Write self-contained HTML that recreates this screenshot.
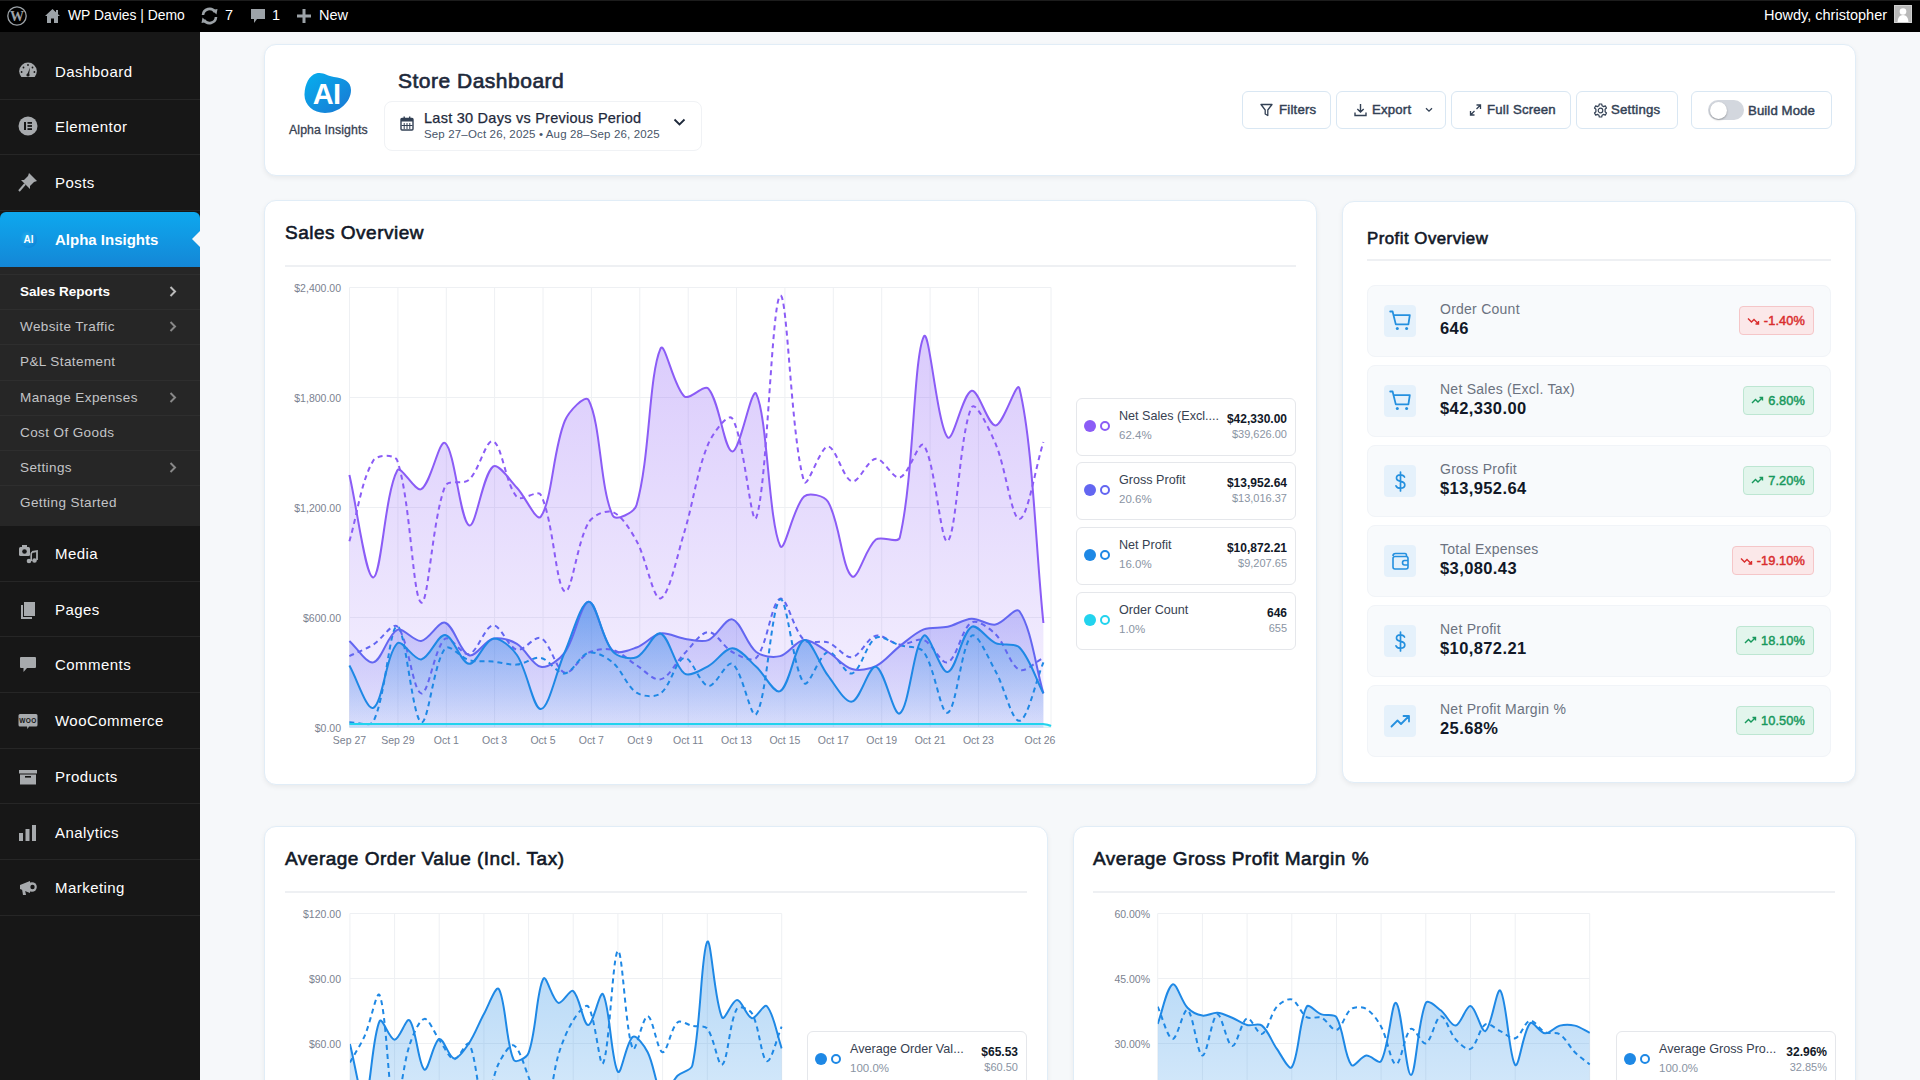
<!DOCTYPE html>
<html><head><meta charset="utf-8">
<style>
*{box-sizing:border-box;margin:0;padding:0}
html,body{width:1920px;height:1080px;overflow:hidden}
body{font-family:"Liberation Sans",sans-serif;background:#f6f8fa;position:relative;color:#1e293b}
.abs{position:absolute}
#adminbar{position:absolute;left:0;top:0;width:1920px;height:32px;background:#000;color:#fff;font-size:14px}
#adminbar .t{position:absolute;top:-1px;line-height:32px;white-space:nowrap}
#side{position:absolute;left:0;top:32px;width:200px;height:1048px;background:#171717}
.mi{position:absolute;left:0;width:200px;height:56px;border-bottom:1px solid #262626;color:#fff;font-size:15px;letter-spacing:0.45px}
.mi .lb{position:absolute;left:55px;top:0;line-height:55px;white-space:nowrap}

.sub{position:absolute;left:0;width:200px;background:#262626}
.si{position:absolute;left:0;width:200px;height:35px;border-top:1px solid #2e2e2e;color:#c8c8c8;font-size:13.5px;letter-spacing:0.4px}
.si .lb{position:absolute;left:20px;top:-1px;line-height:35px;white-space:nowrap}
.si .chev{position:absolute;left:169px;top:11px}
.card{position:absolute;background:#fff;border:1px solid #e1edf7;border-radius:12px;box-shadow:0 2px 5px rgba(0,0,0,0.06)}
.btn{position:absolute;top:91px;height:38px;border:1px solid #d9e7f3;border-radius:6px;background:#fff;font-size:13.2px;font-weight:normal;-webkit-text-stroke:0.45px #334155;letter-spacing:0.2px;color:#334155;line-height:36px;white-space:nowrap}
.ttl{position:absolute;font-size:19px;font-weight:normal;-webkit-text-stroke:0.6px #111827;color:#111827;white-space:nowrap;letter-spacing:0.5px}
.sep{position:absolute;height:2px;background:#eef0f3}
.lg{position:absolute;left:1076px;width:220px;height:58px;border:1px solid #e5e7eb;border-radius:6px;background:#fff}
.lg .d1{position:absolute;left:7px;top:21px;width:12px;height:12px;border-radius:50%}
.lg .d2{position:absolute;left:23px;top:22px;width:10px;height:10px;border-radius:50%;border:2px solid}
.lg .n{position:absolute;left:42px;top:10px;font-size:12.6px;color:#374151;white-space:nowrap}
.lg .p{position:absolute;left:42px;top:30px;font-size:11.5px;color:#8a94a3;white-space:nowrap}
.lg .v{position:absolute;right:8px;top:13px;font-size:12px;font-weight:bold;color:#111827;white-space:nowrap}
.lg .pv{position:absolute;right:8px;top:29px;font-size:11px;color:#8a94a3;white-space:nowrap}
.po{position:absolute;left:1367px;width:464px;height:72px;background:#f8fafc;border:1px solid #f1f4f8;border-radius:8px}
.po .ic{position:absolute;left:16px;top:19px;width:32px;height:32px;border-radius:4px;background:#e5f1fb}
.po .ic svg{position:absolute;left:5px;top:5px}
.po .l{position:absolute;left:72px;top:14.5px;font-size:14px;color:#6b7280;letter-spacing:0.25px;white-space:nowrap}
.po .v{position:absolute;left:72px;top:33px;font-size:16.5px;letter-spacing:0.4px;font-weight:bold;color:#111827;white-space:nowrap}
.bd{position:absolute;top:20px;right:16px;height:29px;border-radius:4px;font-size:12.8px;font-weight:normal;line-height:27px;padding:0 8px 0 7px;white-space:nowrap;letter-spacing:0.1px}
.bd.r{background:#fbe8e9;border:1px solid #f5c6c8;color:#d92d2d;-webkit-text-stroke:0.45px #d92d2d}
.bd.g{background:#e2f5ec;border:1px solid #bde6d2;color:#17985c;-webkit-text-stroke:0.45px #17985c}
.yl{position:absolute;font-size:10.5px;color:#7b8290;text-align:right;white-space:nowrap}
.xl{position:absolute;font-size:10.5px;color:#7b8290;white-space:nowrap;transform:translateX(-50%)}
</style></head><body>
<div id="adminbar"><div class="abs" style="left:0;top:0;width:1920px;height:1px;background:#1c1c1c"></div>
<svg class="abs" style="left:7px;top:6px" width="20" height="20" viewBox="0 0 20 20"><circle cx="10" cy="10" r="9.2" fill="none" stroke="#9ca2a7" stroke-width="1.3"/><text x="10" y="15" font-family="Liberation Serif" font-size="14" font-weight="bold" fill="#9ca2a7" text-anchor="middle">W</text></svg>
<svg class="abs" style="left:44px;top:8px" width="17" height="16" viewBox="0 0 17 16"><path d="M8.5 1 L1 8 L3 8 L3 15 L7 15 L7 10.5 L10 10.5 L10 15 L14 15 L14 8 L16 8 Z" fill="#9ca2a7"/><rect x="12" y="2" width="2" height="4" fill="#9ca2a7"/></svg>
<div class="t" style="left:68px;font-size:13.9px">WP Davies | Demo</div>
<svg class="abs" style="left:200px;top:7px" width="19" height="18" viewBox="0 0 19 18"><path d="M3 8 A6.5 6.5 0 0 1 15 5" fill="none" stroke="#9ca2a7" stroke-width="2.6"/><path d="M16 10 A6.5 6.5 0 0 1 4 13" fill="none" stroke="#9ca2a7" stroke-width="2.6"/><path d="M12 3 L17.5 2 L16.5 7.5 Z" fill="#9ca2a7"/><path d="M7 15 L1.5 16 L2.5 10.5 Z" fill="#9ca2a7"/></svg>
<div class="t" style="left:225px;font-size:14.5px">7</div>
<svg class="abs" style="left:250px;top:8px" width="16" height="18" viewBox="0 0 16 18"><path d="M1 1 H15 V11 H7 L4 15 V11 H1 Z" fill="#9ca2a7"/></svg>
<div class="t" style="left:272px;font-size:14.5px">1</div>
<svg class="abs" style="left:297px;top:9px" width="14" height="14" viewBox="0 0 14 14"><rect x="5.5" y="0" width="3" height="14" fill="#9ca2a7"/><rect x="0" y="5.5" width="14" height="3" fill="#9ca2a7"/></svg>
<div class="t" style="left:319px;font-size:14.5px">New</div>
<div class="t" style="left:1764px;font-size:14.5px">Howdy, christopher</div>
<div class="abs" style="left:1894px;top:5px;width:18px;height:18px;background:#b9b9b9;border:1px solid #cfcfcf;overflow:hidden"><svg width="16" height="16" viewBox="0 0 16 16"><circle cx="8" cy="5.5" r="3.3" fill="#fff"/><path d="M2.5 16 Q3 9 8 9 Q13 9 13.5 16 Z" fill="#fff"/></svg></div>
</div>
<div id="side">
<div class="mi" style="top:11.5px;height:56px"><div class="abs" style="left:18px;top:17px"><svg width="20" height="20" viewBox="0 0 20 20"><path d="M3.3 16 A8.8 8.8 0 1 1 16.7 16 Z" fill="#a7aaad"/><circle cx="10" cy="4" r="0.9" fill="#171717"/><circle cx="5.5" cy="6.5" r="0.9" fill="#171717"/><circle cx="14.5" cy="6.5" r="0.9" fill="#171717"/><circle cx="3.6" cy="11" r="0.9" fill="#171717"/><circle cx="16.4" cy="11" r="0.9" fill="#171717"/><path d="M9 14 L12 6.5 L11 14.5 Z" fill="#171717"/><circle cx="10" cy="14" r="1.6" fill="#171717"/></svg></div><div class="lb">Dashboard</div></div>
<div class="mi" style="top:67px;height:56px"><div class="abs" style="left:18px;top:17px"><svg width="20" height="20" viewBox="0 0 20 20"><circle cx="10" cy="10" r="9.5" fill="#a7aaad"/><rect x="6" y="6" width="2" height="8" fill="#151515"/><rect x="9.5" y="6" width="4.5" height="1.8" fill="#151515"/><rect x="9.5" y="9.1" width="4.5" height="1.8" fill="#151515"/><rect x="9.5" y="12.2" width="4.5" height="1.8" fill="#151515"/></svg></div><div class="lb">Elementor</div></div>
<div class="mi" style="top:123px;height:56px"><div class="abs" style="left:18px;top:17px"><svg width="20" height="20" viewBox="0 0 20 20"><path d="M11 1 L19 9 L16 10 L12 14 L12 17 L3 8 L6 8 L10 4 Z" fill="#a7aaad"/><path d="M7 12 L1 19" stroke="#a7aaad" stroke-width="2"/></svg></div><div class="lb">Posts</div></div>
<div class="abs" style="left:0;top:180px;width:200px;height:56px;background:linear-gradient(180deg,#0ea8ee,#1486d6);border-radius:6px 6px 0 0"></div>
<div class="abs" style="left:20px;top:199px;width:17px;height:17px;border-radius:50%;background:radial-gradient(circle at 40% 35%,#1fb0f0,#0a78d0);color:#fff;font-size:10px;font-weight:bold;line-height:17px;text-align:center">AI</div>
<div class="abs" style="left:55px;top:180px;line-height:55px;color:#fff;font-size:15px;font-weight:bold;white-space:nowrap">Alpha Insights</div>
<div class="abs" style="left:192px;top:199px;width:0;height:0;border-top:8px solid transparent;border-bottom:8px solid transparent;border-right:8px solid #f6f8fa"></div>
<div class="sub" style="top:235px;height:259px">
<div class="si" style="top:7px"><div class="lb" style="color:#fff;font-weight:bold;letter-spacing:0">Sales Reports</div><svg class="chev" width="8" height="11" viewBox="0 0 8 11"><path d="M1.5 1 L6 5.5 L1.5 10" fill="none" stroke="#bbb" stroke-width="2"/></svg></div>
<div class="si" style="top:42.2px"><div class="lb" style="color:#c3c4c7;font-weight:normal;letter-spacing:0.4px">Website Traffic</div><svg class="chev" width="8" height="11" viewBox="0 0 8 11"><path d="M1.5 1 L6 5.5 L1.5 10" fill="none" stroke="#888" stroke-width="2"/></svg></div>
<div class="si" style="top:77.4px"><div class="lb" style="color:#c3c4c7;font-weight:normal;letter-spacing:0.4px">P&amp;L Statement</div></div>
<div class="si" style="top:112.60000000000001px"><div class="lb" style="color:#c3c4c7;font-weight:normal;letter-spacing:0.4px">Manage Expenses</div><svg class="chev" width="8" height="11" viewBox="0 0 8 11"><path d="M1.5 1 L6 5.5 L1.5 10" fill="none" stroke="#888" stroke-width="2"/></svg></div>
<div class="si" style="top:147.8px"><div class="lb" style="color:#c3c4c7;font-weight:normal;letter-spacing:0.4px">Cost Of Goods</div></div>
<div class="si" style="top:183.0px"><div class="lb" style="color:#c3c4c7;font-weight:normal;letter-spacing:0.4px">Settings</div><svg class="chev" width="8" height="11" viewBox="0 0 8 11"><path d="M1.5 1 L6 5.5 L1.5 10" fill="none" stroke="#888" stroke-width="2"/></svg></div>
<div class="si" style="top:218.2px"><div class="lb" style="color:#c3c4c7;font-weight:normal;letter-spacing:0.4px">Getting Started</div></div>
</div>
<div class="mi" style="top:494px;height:55.7px"><div class="abs" style="left:18px;top:18px"><svg width="20" height="20" viewBox="0 0 20 20"><rect x="1" y="3" width="11" height="9" rx="1.5" fill="#a7aaad"/><rect x="4" y="1" width="5" height="3" fill="#a7aaad"/><circle cx="6.5" cy="7.5" r="2.3" fill="#151515"/><path d="M14 8 L19 7 L19 16" stroke="#a7aaad" stroke-width="1.8" fill="none"/><circle cx="16.5" cy="16.5" r="2.3" fill="#a7aaad"/><circle cx="11" cy="17" r="2.3" fill="#a7aaad"/><path d="M13.2 17 L13.2 10 L14 8" stroke="#a7aaad" stroke-width="1.6" fill="none"/></svg></div><div class="lb">Media</div></div>
<div class="mi" style="top:549.7px;height:55.7px"><div class="abs" style="left:18px;top:18px"><svg width="20" height="20" viewBox="0 0 20 20"><rect x="6" y="2" width="11" height="14" fill="#a7aaad"/><path d="M4 5 V18 H14" stroke="#a7aaad" stroke-width="2" fill="none"/></svg></div><div class="lb">Pages</div></div>
<div class="mi" style="top:605.4000000000001px;height:55.7px"><div class="abs" style="left:18px;top:18px"><svg width="20" height="20" viewBox="0 0 20 20"><path d="M3 2 H17 Q18 2 18 3 V12 Q18 13 17 13 H9 L5.5 17 V13 H3 Q2 13 2 12 V3 Q2 2 3 2 Z" fill="#a7aaad"/></svg></div><div class="lb">Comments</div></div>
<div class="mi" style="top:661.1000000000001px;height:55.7px"><div class="abs" style="left:18px;top:18px"><svg width="20" height="20" viewBox="0 0 20 20"><path d="M2 3 H18 Q19.5 3 19.5 4.5 V14 Q19.5 15.5 18 15.5 H11 L9.5 18 L9 15.5 H2 Q0.5 15.5 0.5 14 V4.5 Q0.5 3 2 3 Z" fill="#a7aaad"/><text x="10" y="11.8" font-family="Liberation Sans" font-size="6.5" font-weight="bold" fill="#151515" text-anchor="middle">WOO</text></svg></div><div class="lb">WooCommerce</div></div>
<div class="mi" style="top:716.8000000000002px;height:55.7px"><div class="abs" style="left:18px;top:18px"><svg width="20" height="20" viewBox="0 0 20 20"><rect x="1" y="3" width="18" height="3.5" fill="#a7aaad"/><rect x="2" y="7.5" width="16" height="10" fill="#a7aaad"/><rect x="7" y="9" width="6" height="1.6" fill="#151515"/></svg></div><div class="lb">Products</div></div>
<div class="mi" style="top:772.5000000000002px;height:55.7px"><div class="abs" style="left:18px;top:18px"><svg width="20" height="20" viewBox="0 0 20 20"><rect x="1" y="10" width="4" height="8" fill="#a7aaad"/><rect x="7.5" y="6" width="4" height="12" fill="#a7aaad"/><rect x="14" y="2" width="4" height="16" fill="#a7aaad"/></svg></div><div class="lb">Analytics</div></div>
<div class="mi" style="top:828.2000000000003px;height:55.7px"><div class="abs" style="left:18px;top:18px"><svg width="20" height="20" viewBox="0 0 20 20"><path d="M2 7 L12 3 V15 L2 11 Z" fill="#a7aaad"/><circle cx="14" cy="9" r="4.8" fill="#a7aaad"/><circle cx="14.5" cy="9" r="2.2" fill="#151515"/><path d="M4 11 L5 17 H8 L7 12" fill="#a7aaad"/></svg></div><div class="lb">Marketing</div></div>
</div>
<div class="card" style="left:264px;top:44px;width:1592px;height:132px"></div>
<svg class="abs" style="left:303px;top:72px" width="50" height="43" viewBox="0 0 50 43"><defs><linearGradient id="lgb" x1="0" y1="0" x2="1" y2="1"><stop offset="0" stop-color="#06b0ef"/><stop offset="1" stop-color="#1a76d2"/></linearGradient></defs><path d="M13 1.5 C20 -0.5 24 4 31 5 C40 6 48 9 48 18 C48 30 36 41 22 41 C10 41 1 33 1.5 22 C2 12 6 3.5 13 1.5 Z" fill="url(#lgb)"/><text x="23.5" y="31.5" font-family="Liberation Sans" font-size="29" font-weight="bold" fill="#fff" text-anchor="middle" letter-spacing="-0.8">AI</text></svg>
<div class="abs" style="left:289px;top:123px;font-size:12.3px;color:#374151;letter-spacing:0.1px;-webkit-text-stroke:0.3px #374151;white-space:nowrap">Alpha Insights</div>
<div class="abs" style="left:398px;top:69px;font-size:21px;font-weight:normal;-webkit-text-stroke:0.65px #1e293b;letter-spacing:0.5px;color:#1e293b;white-space:nowrap">Store Dashboard</div>
<div class="abs" style="left:384px;top:101px;width:318px;height:50px;border:1px solid #f0f2f5;border-radius:8px;background:#fff"></div>
<svg class="abs" style="left:400px;top:116px" width="14" height="15" viewBox="0 0 14 15"><rect x="1" y="2.5" width="12" height="11.5" rx="1" fill="none" stroke="#334155" stroke-width="1.4"/><rect x="1" y="2.5" width="12" height="3" fill="#334155"/><rect x="3.5" y="0.5" width="1.4" height="3" fill="#334155"/><rect x="9" y="0.5" width="1.4" height="3" fill="#334155"/><path d="M4.2 7 V13 M7 7 V13 M9.8 7 V13 M1.5 9.5 H12.5" stroke="#334155" stroke-width="1"/></svg>
<div class="abs" style="left:424px;top:110px;font-size:14.5px;color:#1e293b;letter-spacing:0.25px;-webkit-text-stroke:0.25px #1e293b;white-space:nowrap">Last 30 Days vs Previous Period</div>
<div class="abs" style="left:424px;top:128px;font-size:11.5px;color:#475569;letter-spacing:0.15px;white-space:nowrap">Sep 27&#8211;Oct 26, 2025 &#8226; Aug 28&#8211;Sep 26, 2025</div>
<svg class="abs" style="left:673px;top:118px" width="13" height="9" viewBox="0 0 13 9"><path d="M1.5 1.5 L6.5 6.5 L11.5 1.5" fill="none" stroke="#1e293b" stroke-width="1.8"/></svg>
<div class="btn" style="left:1242px;width:89px"><svg class="abs" style="left:17px;top:11px" width="13" height="14" viewBox="0 0 13 14"><path d="M1 1.5 H12 L7.8 7 V12.5 L5.2 11 V7 Z" fill="none" stroke="#334155" stroke-width="1.3" stroke-linejoin="round"/></svg><span class="abs" style="left:36px;top:0">Filters</span></div>
<div class="btn" style="left:1336px;width:110px"><svg class="abs" style="left:17px;top:11px" width="13" height="14" viewBox="0 0 13 14"><path d="M6.5 1 V9 M3.3 6 L6.5 9 L9.7 6 M1 9.5 V12.5 H12 V9.5" fill="none" stroke="#334155" stroke-width="1.4"/></svg><svg class="abs" style="left:88px;top:15px" width="8" height="6" viewBox="0 0 8 6"><path d="M1 1.2 L4 4.2 L7 1.2" fill="none" stroke="#334155" stroke-width="1.3"/></svg><span class="abs" style="left:35px;top:0">Export</span></div>
<div class="btn" style="left:1451px;width:120px"><svg class="abs" style="left:17px;top:11px" width="13" height="14" viewBox="0 0 13 14"><path d="M7.5 2 H11.5 V6 M11.5 2 L7.5 6 M5.5 12 H1.5 V8 M1.5 12 L5.5 8" fill="none" stroke="#334155" stroke-width="1.3"/></svg><span class="abs" style="left:35px;top:0">Full Screen</span></div>
<div class="btn" style="left:1576px;width:102px"><svg class="abs" style="left:16px;top:11px" width="15" height="15" viewBox="0 0 15 15"><circle cx="7.5" cy="7.5" r="2.3" fill="none" stroke="#334155" stroke-width="1.2"/><path d="M6.3 1 H8.7 L9.1 2.8 L10.6 3.6 L12.3 2.9 L13.5 5 L12.1 6.2 V8.8 L13.5 10 L12.3 12.1 L10.6 11.4 L9.1 12.2 L8.7 14 H6.3 L5.9 12.2 L4.4 11.4 L2.7 12.1 L1.5 10 L2.9 8.8 V6.2 L1.5 5 L2.7 2.9 L4.4 3.6 L5.9 2.8 Z" fill="none" stroke="#334155" stroke-width="1.2" stroke-linejoin="round"/></svg><span class="abs" style="left:34px;top:0">Settings</span></div>
<div class="btn" style="left:1691px;width:141px"><div class="abs" style="left:16px;top:8px;width:36px;height:20px;border-radius:10px;background:#d3d7de"></div><div class="abs" style="left:17.5px;top:9.5px;width:17px;height:17px;border-radius:50%;background:#fff;box-shadow:0 1px 2px rgba(0,0,0,0.3)"></div><span class="abs" style="left:56px;top:1px;letter-spacing:0.1px">Build Mode</span></div>
<div class="card" style="left:264px;top:200px;width:1053px;height:585px"></div>
<div class="ttl" style="left:285px;top:222px">Sales Overview</div>
<div class="sep" style="left:285px;top:265px;width:1011px"></div>
<svg class="abs" style="left:0;top:0" width="1920" height="1080" viewBox="0 0 1920 1080">
<defs>
<linearGradient id="gNS" x1="0" y1="0" x2="0" y2="1"><stop offset="0" stop-color="#8b5cf6" stop-opacity="0.32"/><stop offset="1" stop-color="#8b5cf6" stop-opacity="0.08"/></linearGradient>
<linearGradient id="gGP" x1="0" y1="0" x2="0" y2="1"><stop offset="0" stop-color="#6366f1" stop-opacity="0.35"/><stop offset="1" stop-color="#6366f1" stop-opacity="0.1"/></linearGradient>
<linearGradient id="gNP" x1="0" y1="0" x2="0" y2="1"><stop offset="0" stop-color="#1e88e5" stop-opacity="0.45"/><stop offset="1" stop-color="#1e88e5" stop-opacity="0.06"/></linearGradient>
<clipPath id="cp1"><rect x="340" y="280" width="712" height="450"/></clipPath>
</defs>
<line x1="349.5" y1="287.5" x2="1051.0" y2="287.5" stroke="#eef0f3" stroke-width="1"/>
<line x1="349.5" y1="397.5" x2="1051.0" y2="397.5" stroke="#eef0f3" stroke-width="1"/>
<line x1="349.5" y1="507.5" x2="1051.0" y2="507.5" stroke="#eef0f3" stroke-width="1"/>
<line x1="349.5" y1="617.5" x2="1051.0" y2="617.5" stroke="#eef0f3" stroke-width="1"/>
<line x1="349.5" y1="727.5" x2="1051.0" y2="727.5" stroke="#eef0f3" stroke-width="1"/>
<line x1="349.5" y1="287.5" x2="349.5" y2="727.5" stroke="#eef0f3" stroke-width="1"/>
<line x1="397.9" y1="287.5" x2="397.9" y2="727.5" stroke="#eef0f3" stroke-width="1"/>
<line x1="446.3" y1="287.5" x2="446.3" y2="727.5" stroke="#eef0f3" stroke-width="1"/>
<line x1="494.6" y1="287.5" x2="494.6" y2="727.5" stroke="#eef0f3" stroke-width="1"/>
<line x1="543.0" y1="287.5" x2="543.0" y2="727.5" stroke="#eef0f3" stroke-width="1"/>
<line x1="591.4" y1="287.5" x2="591.4" y2="727.5" stroke="#eef0f3" stroke-width="1"/>
<line x1="639.8" y1="287.5" x2="639.8" y2="727.5" stroke="#eef0f3" stroke-width="1"/>
<line x1="688.2" y1="287.5" x2="688.2" y2="727.5" stroke="#eef0f3" stroke-width="1"/>
<line x1="736.5" y1="287.5" x2="736.5" y2="727.5" stroke="#eef0f3" stroke-width="1"/>
<line x1="784.9" y1="287.5" x2="784.9" y2="727.5" stroke="#eef0f3" stroke-width="1"/>
<line x1="833.3" y1="287.5" x2="833.3" y2="727.5" stroke="#eef0f3" stroke-width="1"/>
<line x1="881.7" y1="287.5" x2="881.7" y2="727.5" stroke="#eef0f3" stroke-width="1"/>
<line x1="930.1" y1="287.5" x2="930.1" y2="727.5" stroke="#eef0f3" stroke-width="1"/>
<line x1="978.4" y1="287.5" x2="978.4" y2="727.5" stroke="#eef0f3" stroke-width="1"/>
<line x1="1051.0" y1="287.5" x2="1051.0" y2="727.5" stroke="#eef0f3" stroke-width="1"/>
<g clip-path="url(#cp1)">
<path d="M349.40 475.10 C357.30 508.86 365.60 578.16 373.33 577.40 C381.40 576.61 384.90 493.18 397.26 470.40 C400.69 464.08 415.36 492.54 421.19 489.20 C431.16 483.49 439.16 438.49 445.12 443.00 C454.96 450.44 459.98 520.92 469.06 525.40 C475.77 528.71 482.47 474.88 492.99 466.60 C498.27 462.44 509.66 480.12 516.92 487.70 C525.45 496.62 536.49 522.67 540.85 516.60 C552.29 500.66 552.83 450.06 564.78 421.00 C568.62 411.65 585.36 393.59 588.71 400.20 C601.15 424.74 599.71 487.09 612.64 515.40 C615.51 521.68 634.34 512.79 636.57 505.00 C650.13 457.75 648.70 375.39 660.50 348.60 C664.49 339.55 673.70 387.43 684.43 396.40 C689.49 400.63 704.07 383.65 708.37 388.60 C719.86 401.83 724.10 450.59 732.30 451.50 C739.89 452.34 751.67 384.91 756.23 393.90 C767.47 416.07 768.52 520.94 780.16 545.90 C784.31 554.80 793.17 506.56 804.09 496.50 C808.97 492.01 824.26 495.52 828.02 501.80 C840.05 521.88 841.83 568.41 851.95 576.40 C857.62 580.88 865.68 547.92 875.88 539.60 C881.47 535.05 898.14 544.52 899.81 537.40 C913.93 477.53 913.30 358.45 923.74 336.60 C929.09 325.42 937.18 425.42 947.68 437.30 C952.98 443.30 962.85 392.98 971.61 390.80 C978.65 389.05 987.81 425.76 995.54 425.40 C1003.60 425.03 1016.99 378.36 1019.47 388.60 C1032.78 443.57 1035.50 545.65 1043.40 623.00 L1043.40 727.50 L349.40 727.50 Z" fill="url(#gNS)"/>
<path d="M349.40 640.90 C357.30 648.00 366.33 664.02 373.33 662.40 C382.13 660.36 387.70 634.09 397.26 629.80 C403.50 627.00 413.81 642.00 421.19 640.90 C429.61 639.65 438.39 620.67 445.12 622.70 C454.18 625.43 459.87 652.23 469.06 655.30 C475.67 657.51 484.40 640.76 492.99 638.70 C500.20 636.97 510.21 639.86 516.92 643.80 C526.01 649.14 532.25 665.20 540.85 666.80 C548.04 668.14 559.56 659.79 564.78 652.70 C575.36 638.31 580.67 602.07 588.71 601.70 C596.47 601.34 601.70 640.03 612.64 650.50 C617.50 655.15 629.22 650.11 636.57 647.50 C645.02 644.50 652.12 635.04 660.50 633.50 C667.91 632.14 676.45 637.60 684.43 638.70 C692.25 639.78 701.56 642.85 708.37 640.10 C717.35 636.48 725.36 617.68 732.30 619.40 C741.16 621.60 746.36 644.43 756.23 652.00 C762.15 656.54 772.93 657.90 780.16 656.10 C788.73 653.97 795.90 640.80 804.09 640.10 C811.69 639.45 820.49 647.45 828.02 652.00 C836.29 656.99 843.28 666.45 851.95 669.00 C859.07 671.10 869.00 669.39 875.88 666.10 C884.79 661.84 891.65 652.36 899.81 646.10 C907.45 640.25 915.09 632.89 923.74 629.40 C930.88 626.52 939.97 628.52 947.68 626.80 C955.76 624.99 963.61 619.07 971.61 618.70 C979.41 618.34 988.06 625.76 995.54 624.60 C1003.85 623.31 1015.64 605.79 1019.47 611.30 C1031.43 628.50 1035.50 666.31 1043.40 693.40 L1043.40 727.50 L349.40 727.50 Z" fill="url(#gGP)"/>
<path d="M349.40 665.60 C357.30 679.53 366.79 710.83 373.33 707.80 C382.59 703.51 386.13 654.66 397.26 643.40 C401.93 638.68 413.97 660.67 421.19 659.40 C429.77 657.90 437.59 634.31 445.12 635.00 C453.38 635.76 460.86 663.17 469.06 663.80 C476.65 664.39 484.38 640.28 492.99 638.70 C500.17 637.38 511.72 647.37 516.92 655.00 C527.52 670.57 533.13 709.48 540.85 709.00 C548.93 708.49 556.47 670.63 564.78 652.00 C572.27 635.22 580.77 601.82 588.71 601.70 C596.56 601.59 601.73 638.65 612.64 651.30 C617.52 656.96 629.90 659.68 636.57 657.20 C645.69 653.81 653.88 631.24 660.50 633.50 C669.67 636.62 674.16 666.50 684.43 673.50 C689.96 677.26 701.16 669.90 708.37 666.10 C716.95 661.58 724.45 648.19 732.30 648.30 C740.25 648.42 748.81 660.15 756.23 666.80 C764.61 674.31 774.20 694.52 780.16 691.20 C790.00 685.71 795.12 643.01 804.09 640.10 C810.91 637.89 819.35 664.56 828.02 675.70 C835.15 684.86 844.76 702.94 851.95 701.60 C860.56 700.00 868.83 665.06 875.88 666.80 C884.63 668.96 893.62 717.42 899.81 713.40 C909.42 707.16 913.45 644.60 923.74 635.70 C929.25 630.94 940.42 673.35 947.68 672.00 C956.21 670.41 961.52 632.89 971.61 626.80 C977.32 623.35 986.96 639.39 995.54 643.10 C1002.75 646.22 1014.42 642.19 1019.47 647.50 C1030.21 658.79 1035.50 678.25 1043.40 693.40 L1043.40 727.50 L349.40 727.50 Z" fill="url(#gNP)"/>
<path d="M349.40 541.20 C357.30 514.57 361.03 481.24 373.33 460.50 C376.83 454.60 395.01 453.82 397.26 460.50 C410.81 500.68 412.54 597.87 421.19 602.50 C428.33 606.32 432.05 519.61 445.12 486.10 C447.85 479.12 463.49 485.03 469.06 479.80 C479.29 470.18 486.23 438.66 492.99 441.10 C502.03 444.37 505.59 484.34 516.92 497.10 C521.39 502.13 537.77 488.94 540.85 495.00 C553.57 520.09 555.68 586.31 564.78 591.50 C571.48 595.32 577.06 541.65 588.71 522.30 C592.86 515.41 606.18 509.47 612.64 512.00 C621.97 515.65 630.62 530.26 636.57 541.00 C646.42 558.77 653.12 599.83 660.50 598.40 C668.92 596.77 677.53 554.02 684.43 531.70 C693.33 502.94 696.92 470.67 708.37 443.60 C712.71 433.32 728.29 412.30 732.30 418.50 C744.08 436.72 751.28 530.31 756.23 517.60 C767.07 489.78 771.57 302.20 780.16 295.70 C787.36 290.25 791.21 440.81 804.09 481.40 C807.00 490.57 820.12 446.50 828.02 446.50 C835.92 446.50 843.08 479.14 851.95 481.40 C858.87 483.16 867.68 459.35 875.88 458.70 C883.47 458.10 893.01 479.52 899.81 477.60 C908.80 475.06 919.18 439.13 923.74 445.20 C934.97 460.12 941.02 546.45 947.68 541.20 C956.82 533.98 959.63 431.81 971.61 407.40 C975.43 399.61 989.95 430.55 995.54 443.60 C1005.74 467.41 1011.65 519.36 1019.47 519.10 C1027.44 518.83 1035.50 467.44 1043.40 442.00" fill="none" stroke="#8b5cf6" stroke-width="2" stroke-dasharray="5 4"/>
<path d="M349.40 656.10 C357.30 652.31 365.92 649.19 373.33 644.60 C381.71 639.42 392.57 621.72 397.26 626.50 C408.37 637.82 412.61 691.21 421.19 693.40 C428.41 695.24 434.43 647.46 445.12 638.70 C450.23 634.52 462.24 656.11 469.06 654.20 C478.03 651.69 484.73 626.06 492.99 625.30 C500.52 624.61 508.04 647.44 516.92 649.80 C523.83 651.64 534.73 635.07 540.85 638.00 C550.52 642.63 555.70 669.91 564.78 672.70 C571.50 674.76 579.80 656.96 588.71 652.70 C595.60 649.41 605.41 647.90 612.64 649.80 C621.20 652.05 628.57 660.35 636.57 665.30 C644.37 670.12 653.54 681.12 660.50 679.40 C669.34 677.22 676.18 661.68 684.43 653.50 C691.97 646.04 700.35 632.25 708.37 632.00 C716.14 631.76 723.47 647.23 732.30 652.00 C739.27 655.77 751.83 662.80 756.23 657.90 C767.62 645.21 771.13 602.06 780.16 598.70 C786.92 596.18 793.58 630.50 804.09 640.10 C809.37 644.92 820.74 639.80 828.02 642.40 C836.54 645.44 844.58 658.23 851.95 657.20 C860.38 656.02 867.08 638.02 875.88 635.70 C882.87 633.86 891.73 643.86 899.81 644.60 C907.52 645.31 917.00 637.59 923.74 640.10 C932.80 643.47 941.16 664.81 947.68 662.40 C956.96 658.97 961.56 628.32 971.61 622.40 C977.36 619.01 989.48 628.20 995.54 634.20 C1005.28 643.84 1009.74 664.98 1019.47 669.80 C1025.53 672.80 1035.50 661.83 1043.40 657.90" fill="none" stroke="#6366f1" stroke-width="2" stroke-dasharray="5 4"/>
<path d="M349.40 722.30 C357.30 722.07 370.24 727.50 373.33 721.60 C386.04 696.06 389.39 625.98 397.26 626.10 C405.19 626.22 412.34 718.19 421.19 722.30 C428.14 725.52 433.36 663.58 445.12 648.30 C449.16 643.06 460.74 657.79 469.06 660.10 C476.53 662.18 485.11 660.86 492.99 661.60 C500.91 662.34 509.14 665.20 516.92 664.60 C524.93 663.98 533.50 656.53 540.85 657.90 C549.29 659.47 557.29 674.31 564.78 673.50 C573.09 672.60 580.01 654.72 588.71 652.70 C595.80 651.06 606.31 657.11 612.64 662.40 C622.11 670.31 626.82 686.37 636.57 692.70 C642.62 696.63 654.85 697.61 660.50 693.50 C670.64 686.13 675.94 659.23 684.43 657.90 C691.74 656.76 699.98 684.97 708.37 686.00 C715.78 686.91 726.47 660.37 732.30 663.80 C742.26 669.67 751.14 721.05 756.23 714.20 C766.93 699.80 771.09 605.29 780.16 599.40 C786.89 595.03 793.20 671.14 804.09 683.10 C809.00 688.49 819.34 653.74 828.02 652.00 C835.14 650.57 845.18 675.49 851.95 673.50 C860.98 670.84 865.91 643.78 875.88 637.90 C881.71 634.47 891.89 642.96 899.81 645.30 C907.68 647.62 919.39 645.87 923.74 652.00 C935.18 668.11 940.61 715.11 947.68 712.70 C956.41 709.73 961.29 644.65 971.61 635.70 C977.08 630.95 988.63 658.92 995.54 671.20 C1004.42 687.00 1012.11 722.15 1019.47 720.80 C1027.90 719.25 1035.50 681.67 1043.40 662.40" fill="none" stroke="#1e88e5" stroke-width="2" stroke-dasharray="5 4"/>
<path d="M349.40 475.10 C357.30 508.86 365.60 578.16 373.33 577.40 C381.40 576.61 384.90 493.18 397.26 470.40 C400.69 464.08 415.36 492.54 421.19 489.20 C431.16 483.49 439.16 438.49 445.12 443.00 C454.96 450.44 459.98 520.92 469.06 525.40 C475.77 528.71 482.47 474.88 492.99 466.60 C498.27 462.44 509.66 480.12 516.92 487.70 C525.45 496.62 536.49 522.67 540.85 516.60 C552.29 500.66 552.83 450.06 564.78 421.00 C568.62 411.65 585.36 393.59 588.71 400.20 C601.15 424.74 599.71 487.09 612.64 515.40 C615.51 521.68 634.34 512.79 636.57 505.00 C650.13 457.75 648.70 375.39 660.50 348.60 C664.49 339.55 673.70 387.43 684.43 396.40 C689.49 400.63 704.07 383.65 708.37 388.60 C719.86 401.83 724.10 450.59 732.30 451.50 C739.89 452.34 751.67 384.91 756.23 393.90 C767.47 416.07 768.52 520.94 780.16 545.90 C784.31 554.80 793.17 506.56 804.09 496.50 C808.97 492.01 824.26 495.52 828.02 501.80 C840.05 521.88 841.83 568.41 851.95 576.40 C857.62 580.88 865.68 547.92 875.88 539.60 C881.47 535.05 898.14 544.52 899.81 537.40 C913.93 477.53 913.30 358.45 923.74 336.60 C929.09 325.42 937.18 425.42 947.68 437.30 C952.98 443.30 962.85 392.98 971.61 390.80 C978.65 389.05 987.81 425.76 995.54 425.40 C1003.60 425.03 1016.99 378.36 1019.47 388.60 C1032.78 443.57 1035.50 545.65 1043.40 623.00" fill="none" stroke="#8b5cf6" stroke-width="2" />
<path d="M349.40 640.90 C357.30 648.00 366.33 664.02 373.33 662.40 C382.13 660.36 387.70 634.09 397.26 629.80 C403.50 627.00 413.81 642.00 421.19 640.90 C429.61 639.65 438.39 620.67 445.12 622.70 C454.18 625.43 459.87 652.23 469.06 655.30 C475.67 657.51 484.40 640.76 492.99 638.70 C500.20 636.97 510.21 639.86 516.92 643.80 C526.01 649.14 532.25 665.20 540.85 666.80 C548.04 668.14 559.56 659.79 564.78 652.70 C575.36 638.31 580.67 602.07 588.71 601.70 C596.47 601.34 601.70 640.03 612.64 650.50 C617.50 655.15 629.22 650.11 636.57 647.50 C645.02 644.50 652.12 635.04 660.50 633.50 C667.91 632.14 676.45 637.60 684.43 638.70 C692.25 639.78 701.56 642.85 708.37 640.10 C717.35 636.48 725.36 617.68 732.30 619.40 C741.16 621.60 746.36 644.43 756.23 652.00 C762.15 656.54 772.93 657.90 780.16 656.10 C788.73 653.97 795.90 640.80 804.09 640.10 C811.69 639.45 820.49 647.45 828.02 652.00 C836.29 656.99 843.28 666.45 851.95 669.00 C859.07 671.10 869.00 669.39 875.88 666.10 C884.79 661.84 891.65 652.36 899.81 646.10 C907.45 640.25 915.09 632.89 923.74 629.40 C930.88 626.52 939.97 628.52 947.68 626.80 C955.76 624.99 963.61 619.07 971.61 618.70 C979.41 618.34 988.06 625.76 995.54 624.60 C1003.85 623.31 1015.64 605.79 1019.47 611.30 C1031.43 628.50 1035.50 666.31 1043.40 693.40" fill="none" stroke="#6366f1" stroke-width="2" />
<path d="M349.40 665.60 C357.30 679.53 366.79 710.83 373.33 707.80 C382.59 703.51 386.13 654.66 397.26 643.40 C401.93 638.68 413.97 660.67 421.19 659.40 C429.77 657.90 437.59 634.31 445.12 635.00 C453.38 635.76 460.86 663.17 469.06 663.80 C476.65 664.39 484.38 640.28 492.99 638.70 C500.17 637.38 511.72 647.37 516.92 655.00 C527.52 670.57 533.13 709.48 540.85 709.00 C548.93 708.49 556.47 670.63 564.78 652.00 C572.27 635.22 580.77 601.82 588.71 601.70 C596.56 601.59 601.73 638.65 612.64 651.30 C617.52 656.96 629.90 659.68 636.57 657.20 C645.69 653.81 653.88 631.24 660.50 633.50 C669.67 636.62 674.16 666.50 684.43 673.50 C689.96 677.26 701.16 669.90 708.37 666.10 C716.95 661.58 724.45 648.19 732.30 648.30 C740.25 648.42 748.81 660.15 756.23 666.80 C764.61 674.31 774.20 694.52 780.16 691.20 C790.00 685.71 795.12 643.01 804.09 640.10 C810.91 637.89 819.35 664.56 828.02 675.70 C835.15 684.86 844.76 702.94 851.95 701.60 C860.56 700.00 868.83 665.06 875.88 666.80 C884.63 668.96 893.62 717.42 899.81 713.40 C909.42 707.16 913.45 644.60 923.74 635.70 C929.25 630.94 940.42 673.35 947.68 672.00 C956.21 670.41 961.52 632.89 971.61 626.80 C977.32 623.35 986.96 639.39 995.54 643.10 C1002.75 646.22 1014.42 642.19 1019.47 647.50 C1030.21 658.79 1035.50 678.25 1043.40 693.40" fill="none" stroke="#1e88e5" stroke-width="2" />
<rect x="349.4" y="724" width="701.6" height="3.5" fill="#22d3ee" fill-opacity="0.14"/>
<path d="M349.4 724 L1043 724 Q1048 724.5 1051 726" fill="none" stroke="#22d3ee" stroke-width="2.2"/>
</g>
</svg>
<div class="yl" style="left:240px;width:101px;top:282.0px">$2,400.00</div>
<div class="yl" style="left:240px;width:101px;top:392.0px">$1,800.00</div>
<div class="yl" style="left:240px;width:101px;top:502.0px">$1,200.00</div>
<div class="yl" style="left:240px;width:101px;top:612.0px">$600.00</div>
<div class="yl" style="left:240px;width:101px;top:722.0px">$0.00</div>
<div class="xl" style="left:349.5px;top:734px">Sep 27</div>
<div class="xl" style="left:397.9px;top:734px">Sep 29</div>
<div class="xl" style="left:446.3px;top:734px">Oct 1</div>
<div class="xl" style="left:494.6px;top:734px">Oct 3</div>
<div class="xl" style="left:543.0px;top:734px">Oct 5</div>
<div class="xl" style="left:591.4px;top:734px">Oct 7</div>
<div class="xl" style="left:639.8px;top:734px">Oct 9</div>
<div class="xl" style="left:688.2px;top:734px">Oct 11</div>
<div class="xl" style="left:736.5px;top:734px">Oct 13</div>
<div class="xl" style="left:784.9px;top:734px">Oct 15</div>
<div class="xl" style="left:833.3px;top:734px">Oct 17</div>
<div class="xl" style="left:881.7px;top:734px">Oct 19</div>
<div class="xl" style="left:930.1px;top:734px">Oct 21</div>
<div class="xl" style="left:978.4px;top:734px">Oct 23</div>
<div class="xl" style="left:1040.0px;top:734px">Oct 26</div>
<div class="lg" style="top:398px"><div class="d1" style="background:#8b5cf6"></div><div class="d2" style="border-color:#8b5cf6"></div><div class="n">Net Sales (Excl....</div><div class="p">62.4%</div><div class="v">$42,330.00</div><div class="pv">$39,626.00</div></div>
<div class="lg" style="top:462px"><div class="d1" style="background:#6366f1"></div><div class="d2" style="border-color:#6366f1"></div><div class="n">Gross Profit</div><div class="p">20.6%</div><div class="v">$13,952.64</div><div class="pv">$13,016.37</div></div>
<div class="lg" style="top:527px"><div class="d1" style="background:#1e88e5"></div><div class="d2" style="border-color:#1e88e5"></div><div class="n">Net Profit</div><div class="p">16.0%</div><div class="v">$10,872.21</div><div class="pv">$9,207.65</div></div>
<div class="lg" style="top:592px"><div class="d1" style="background:#22d3ee"></div><div class="d2" style="border-color:#22d3ee"></div><div class="n">Order Count</div><div class="p">1.0%</div><div class="v">646</div><div class="pv">655</div></div>
<div class="card" style="left:1342px;top:201px;width:514px;height:582px"></div>
<div class="ttl" style="left:1367px;top:229px;font-size:16.8px">Profit Overview</div>
<div class="sep" style="left:1367px;top:259px;width:464px;height:2px"></div>
<div class="po" style="top:285px"><div class="ic"><svg width="23" height="23" viewBox="0 0 23 23"><path d="M1.2 1.5 H3.6 L6.8 14.4 H19.4 L20.8 5.2 H5" fill="none" stroke="#2590df" stroke-width="1.8" stroke-linejoin="round" stroke-linecap="round"/><circle cx="8.3" cy="18.6" r="1.5" fill="#2590df"/><circle cx="17.6" cy="18.6" r="1.5" fill="#2590df"/></svg></div><div class="l">Order Count</div><div class="v">646</div><div class="bd r"><svg style="position:relative;top:2px;margin-right:4px" width="13" height="12" viewBox="0 0 13 12"><path d="M1 3.5 L4.5 7 L7 4.5 L11 8.5 M8.5 9 H11.5 V6" fill="none" stroke="#d92d2d" stroke-width="1.4"/></svg>-1.40%</div></div>
<div class="po" style="top:365px"><div class="ic"><svg width="23" height="23" viewBox="0 0 23 23"><path d="M1.2 1.5 H3.6 L6.8 14.4 H19.4 L20.8 5.2 H5" fill="none" stroke="#2590df" stroke-width="1.8" stroke-linejoin="round" stroke-linecap="round"/><circle cx="8.3" cy="18.6" r="1.5" fill="#2590df"/><circle cx="17.6" cy="18.6" r="1.5" fill="#2590df"/></svg></div><div class="l">Net Sales (Excl. Tax)</div><div class="v">$42,330.00</div><div class="bd g"><svg style="position:relative;top:1px;margin-right:4px" width="13" height="12" viewBox="0 0 13 12"><path d="M1 9 L4.5 5.5 L7 8 L11 4 M8.5 3.5 H11.5 V6.5" fill="none" stroke="#17985c" stroke-width="1.4"/></svg>6.80%</div></div>
<div class="po" style="top:445px"><div class="ic"><svg width="23" height="23" viewBox="0 0 23 23"><path d="M15.5 7 Q14.5 4.8 11.5 4.8 Q7.5 4.8 7.5 8 Q7.5 10.5 11.5 11.3 Q15.8 12 15.8 15 Q15.8 18.2 11.5 18.2 Q8 18.2 7 15.8 M11.5 2 V21" fill="none" stroke="#2590df" stroke-width="1.7" stroke-linecap="round"/></svg></div><div class="l">Gross Profit</div><div class="v">$13,952.64</div><div class="bd g"><svg style="position:relative;top:1px;margin-right:4px" width="13" height="12" viewBox="0 0 13 12"><path d="M1 9 L4.5 5.5 L7 8 L11 4 M8.5 3.5 H11.5 V6.5" fill="none" stroke="#17985c" stroke-width="1.4"/></svg>7.20%</div></div>
<div class="po" style="top:525px"><div class="ic"><svg width="23" height="23" viewBox="0 0 23 23"><path d="M4 6 Q4 3.5 6.5 3.5 H16 Q17.5 3.5 17.5 5.5 V7" fill="none" stroke="#2590df" stroke-width="1.6"/><rect x="4" y="6.5" width="15" height="12.5" rx="2" fill="none" stroke="#2590df" stroke-width="1.6"/><path d="M19 10.5 H15.5 Q13.5 10.5 13.5 12.8 Q13.5 15 15.5 15 H19" fill="none" stroke="#2590df" stroke-width="1.6"/></svg></div><div class="l">Total Expenses</div><div class="v">$3,080.43</div><div class="bd r"><svg style="position:relative;top:2px;margin-right:4px" width="13" height="12" viewBox="0 0 13 12"><path d="M1 3.5 L4.5 7 L7 4.5 L11 8.5 M8.5 9 H11.5 V6" fill="none" stroke="#d92d2d" stroke-width="1.4"/></svg>-19.10%</div></div>
<div class="po" style="top:605px"><div class="ic"><svg width="23" height="23" viewBox="0 0 23 23"><path d="M15.5 7 Q14.5 4.8 11.5 4.8 Q7.5 4.8 7.5 8 Q7.5 10.5 11.5 11.3 Q15.8 12 15.8 15 Q15.8 18.2 11.5 18.2 Q8 18.2 7 15.8 M11.5 2 V21" fill="none" stroke="#2590df" stroke-width="1.7" stroke-linecap="round"/></svg></div><div class="l">Net Profit</div><div class="v">$10,872.21</div><div class="bd g"><svg style="position:relative;top:1px;margin-right:4px" width="13" height="12" viewBox="0 0 13 12"><path d="M1 9 L4.5 5.5 L7 8 L11 4 M8.5 3.5 H11.5 V6.5" fill="none" stroke="#17985c" stroke-width="1.4"/></svg>18.10%</div></div>
<div class="po" style="top:685px"><div class="ic"><svg width="23" height="23" viewBox="0 0 23 23"><path d="M2.5 16.5 L8.5 10.5 L12 14 L19.5 6.5 M14.5 6 H20 V11.5" fill="none" stroke="#2590df" stroke-width="1.8" stroke-linejoin="round" stroke-linecap="round"/></svg></div><div class="l">Net Profit Margin %</div><div class="v">25.68%</div><div class="bd g"><svg style="position:relative;top:1px;margin-right:4px" width="13" height="12" viewBox="0 0 13 12"><path d="M1 9 L4.5 5.5 L7 8 L11 4 M8.5 3.5 H11.5 V6.5" fill="none" stroke="#17985c" stroke-width="1.4"/></svg>10.50%</div></div>
<div class="card" style="left:264px;top:826px;width:784px;height:300px"></div>
<div class="ttl" style="left:285px;top:848px">Average Order Value (Incl. Tax)</div>
<div class="sep" style="left:285px;top:891px;width:742px"></div>
<svg class="abs" style="left:0;top:0" width="1920" height="1080" viewBox="0 0 1920 1080">
<defs><linearGradient id="gaov" gradientUnits="userSpaceOnUse" x1="0" y1="940" x2="0" y2="1173"><stop offset="0" stop-color="#1e88e5" stop-opacity="0.34"/><stop offset="1" stop-color="#1e88e5" stop-opacity="0.12"/></linearGradient><clipPath id="caov"><rect x="349.9" y="905" width="432.8" height="200"/></clipPath></defs>
<line x1="349.9" y1="913.5" x2="781.7" y2="913.5" stroke="#eef0f3" stroke-width="1"/>
<line x1="349.9" y1="978.5" x2="781.7" y2="978.5" stroke="#eef0f3" stroke-width="1"/>
<line x1="349.9" y1="1043.5" x2="781.7" y2="1043.5" stroke="#eef0f3" stroke-width="1"/>
<line x1="349.9" y1="1108.5" x2="781.7" y2="1108.5" stroke="#eef0f3" stroke-width="1"/>
<line x1="349.9" y1="913.5" x2="349.9" y2="1080.0" stroke="#eef0f3" stroke-width="1"/>
<line x1="394.6" y1="913.5" x2="394.6" y2="1080.0" stroke="#eef0f3" stroke-width="1"/>
<line x1="439.2" y1="913.5" x2="439.2" y2="1080.0" stroke="#eef0f3" stroke-width="1"/>
<line x1="483.9" y1="913.5" x2="483.9" y2="1080.0" stroke="#eef0f3" stroke-width="1"/>
<line x1="528.6" y1="913.5" x2="528.6" y2="1080.0" stroke="#eef0f3" stroke-width="1"/>
<line x1="573.2" y1="913.5" x2="573.2" y2="1080.0" stroke="#eef0f3" stroke-width="1"/>
<line x1="617.9" y1="913.5" x2="617.9" y2="1080.0" stroke="#eef0f3" stroke-width="1"/>
<line x1="662.6" y1="913.5" x2="662.6" y2="1080.0" stroke="#eef0f3" stroke-width="1"/>
<line x1="707.3" y1="913.5" x2="707.3" y2="1080.0" stroke="#eef0f3" stroke-width="1"/>
<line x1="781.7" y1="913.5" x2="781.7" y2="1080.0" stroke="#eef0f3" stroke-width="1"/>
<g clip-path="url(#caov)">
<path d="M349.90 1043.90 C354.81 1062.41 360.67 1103.17 364.79 1100.00 C370.50 1095.61 372.10 1036.34 379.68 1021.00 C381.93 1016.44 389.71 1039.81 394.57 1039.70 C399.54 1039.58 406.29 1017.12 409.46 1020.30 C416.12 1026.99 418.43 1065.88 424.35 1069.60 C428.26 1072.06 433.53 1041.13 439.24 1039.00 C443.35 1037.47 448.87 1057.76 454.13 1058.50 C458.70 1059.14 465.14 1048.99 469.02 1043.20 C474.97 1034.31 478.70 1023.47 483.91 1014.00 C488.53 1005.59 495.98 984.66 498.80 989.00 C505.81 999.81 505.68 1042.72 513.69 1059.90 C515.50 1063.80 526.82 1057.69 528.58 1052.90 C536.65 1030.86 536.32 990.59 543.47 978.60 C546.15 974.09 552.46 1000.42 558.36 1002.90 C562.29 1004.55 569.92 988.62 573.24 991.10 C579.74 995.95 583.03 1024.57 588.13 1025.10 C592.85 1025.59 600.05 989.54 603.02 994.20 C609.87 1004.92 611.27 1062.18 617.91 1071.70 C621.10 1076.27 626.52 1041.01 632.80 1036.90 C636.35 1034.58 644.55 1046.06 647.69 1052.20 C654.37 1065.23 656.19 1089.93 662.58 1095.00 C666.01 1097.72 671.85 1081.39 677.47 1075.80 C681.68 1071.62 691.11 1071.03 692.36 1065.40 C700.94 1026.81 701.18 951.56 707.25 941.80 C711.01 935.75 714.56 1002.66 722.14 1017.50 C724.39 1021.90 732.17 999.99 737.03 1000.10 C742.00 1000.22 746.52 1017.11 751.92 1018.20 C756.34 1019.09 763.86 1003.12 766.81 1006.10 C773.69 1013.05 776.79 1034.37 781.70 1048.30 L781.70 1173.50 L349.90 1173.50 Z" fill="url(#gaov)"/>
<path d="M349.90 1062.60 C354.81 1053.69 360.68 1044.88 364.79 1035.60 C370.51 1022.67 377.02 988.65 379.68 995.30 C386.84 1013.20 388.33 1099.52 394.57 1110.00 C398.15 1116.02 402.71 1065.94 409.46 1045.30 C412.54 1035.88 419.02 1019.90 424.35 1018.90 C428.85 1018.05 434.22 1032.91 439.24 1039.70 C444.05 1046.21 448.87 1058.46 454.13 1059.20 C458.70 1059.84 466.53 1040.07 469.02 1043.90 C476.35 1055.18 478.14 1101.24 483.91 1105.00 C487.97 1107.65 492.36 1076.20 498.80 1063.30 C502.19 1056.50 509.75 1043.49 513.69 1045.30 C519.58 1048.01 524.30 1066.28 528.58 1077.00 C534.13 1090.93 539.48 1122.94 543.47 1120.00 C549.31 1115.68 552.08 1076.01 558.36 1055.00 C561.91 1043.11 566.86 1030.72 573.24 1020.30 C576.69 1014.68 585.61 1002.75 588.13 1006.40 C595.43 1016.94 599.67 1069.56 603.02 1063.30 C609.50 1051.22 612.67 953.35 617.91 950.80 C622.50 948.57 625.59 1032.98 632.80 1048.80 C635.42 1054.53 642.98 1015.56 647.69 1016.10 C652.81 1016.68 657.28 1051.08 662.58 1052.20 C667.11 1053.16 670.73 1028.37 677.47 1022.40 C680.56 1019.66 687.43 1024.77 692.36 1025.80 C697.26 1026.82 704.50 1025.01 707.25 1028.60 C714.33 1037.85 718.19 1067.37 722.14 1064.70 C728.02 1060.73 729.29 1021.87 737.03 1008.50 C739.11 1004.90 749.58 1009.17 751.92 1013.30 C759.41 1026.53 761.19 1058.57 766.81 1061.10 C771.02 1062.99 776.79 1038.05 781.70 1026.70" fill="none" stroke="#1e88e5" stroke-width="2" stroke-dasharray="5 4"/>
<path d="M349.90 1043.90 C354.81 1062.41 360.67 1103.17 364.79 1100.00 C370.50 1095.61 372.10 1036.34 379.68 1021.00 C381.93 1016.44 389.71 1039.81 394.57 1039.70 C399.54 1039.58 406.29 1017.12 409.46 1020.30 C416.12 1026.99 418.43 1065.88 424.35 1069.60 C428.26 1072.06 433.53 1041.13 439.24 1039.00 C443.35 1037.47 448.87 1057.76 454.13 1058.50 C458.70 1059.14 465.14 1048.99 469.02 1043.20 C474.97 1034.31 478.70 1023.47 483.91 1014.00 C488.53 1005.59 495.98 984.66 498.80 989.00 C505.81 999.81 505.68 1042.72 513.69 1059.90 C515.50 1063.80 526.82 1057.69 528.58 1052.90 C536.65 1030.86 536.32 990.59 543.47 978.60 C546.15 974.09 552.46 1000.42 558.36 1002.90 C562.29 1004.55 569.92 988.62 573.24 991.10 C579.74 995.95 583.03 1024.57 588.13 1025.10 C592.85 1025.59 600.05 989.54 603.02 994.20 C609.87 1004.92 611.27 1062.18 617.91 1071.70 C621.10 1076.27 626.52 1041.01 632.80 1036.90 C636.35 1034.58 644.55 1046.06 647.69 1052.20 C654.37 1065.23 656.19 1089.93 662.58 1095.00 C666.01 1097.72 671.85 1081.39 677.47 1075.80 C681.68 1071.62 691.11 1071.03 692.36 1065.40 C700.94 1026.81 701.18 951.56 707.25 941.80 C711.01 935.75 714.56 1002.66 722.14 1017.50 C724.39 1021.90 732.17 999.99 737.03 1000.10 C742.00 1000.22 746.52 1017.11 751.92 1018.20 C756.34 1019.09 763.86 1003.12 766.81 1006.10 C773.69 1013.05 776.79 1034.37 781.70 1048.30" fill="none" stroke="#1e88e5" stroke-width="2"/>
</g></svg>
<div class="yl" style="left:241px;width:100px;top:908.0px">$120.00</div>
<div class="yl" style="left:241px;width:100px;top:973.0px">$90.00</div>
<div class="yl" style="left:241px;width:100px;top:1038.0px">$60.00</div>
<div class="yl" style="left:241px;width:100px;top:1103.0px">$30.00</div>
<div class="lg" style="left:807px;top:1031px;height:70px;width:220px"><div class="d1" style="background:#1e88e5;top:21px"></div><div class="d2" style="border-color:#1e88e5;top:22px"></div><div class="n">Average Order Val...</div><div class="p">100.0%</div><div class="v">$65.53</div><div class="pv">$60.50</div></div>
<div class="card" style="left:1073px;top:826px;width:783px;height:300px"></div>
<div class="ttl" style="left:1093px;top:848px">Average Gross Profit Margin %</div>
<div class="sep" style="left:1093px;top:891px;width:742px"></div>
<svg class="abs" style="left:0;top:0" width="1920" height="1080" viewBox="0 0 1920 1080">
<defs><linearGradient id="ggm" gradientUnits="userSpaceOnUse" x1="0" y1="940" x2="0" y2="1173"><stop offset="0" stop-color="#1e88e5" stop-opacity="0.34"/><stop offset="1" stop-color="#1e88e5" stop-opacity="0.12"/></linearGradient><clipPath id="cgm"><rect x="1157.7" y="905" width="433.0" height="200"/></clipPath></defs>
<line x1="1157.7" y1="913.5" x2="1589.7" y2="913.5" stroke="#eef0f3" stroke-width="1"/>
<line x1="1157.7" y1="978.5" x2="1589.7" y2="978.5" stroke="#eef0f3" stroke-width="1"/>
<line x1="1157.7" y1="1043.5" x2="1589.7" y2="1043.5" stroke="#eef0f3" stroke-width="1"/>
<line x1="1157.7" y1="1108.5" x2="1589.7" y2="1108.5" stroke="#eef0f3" stroke-width="1"/>
<line x1="1157.7" y1="913.5" x2="1157.7" y2="1080.0" stroke="#eef0f3" stroke-width="1"/>
<line x1="1202.4" y1="913.5" x2="1202.4" y2="1080.0" stroke="#eef0f3" stroke-width="1"/>
<line x1="1247.1" y1="913.5" x2="1247.1" y2="1080.0" stroke="#eef0f3" stroke-width="1"/>
<line x1="1291.8" y1="913.5" x2="1291.8" y2="1080.0" stroke="#eef0f3" stroke-width="1"/>
<line x1="1336.5" y1="913.5" x2="1336.5" y2="1080.0" stroke="#eef0f3" stroke-width="1"/>
<line x1="1381.1" y1="913.5" x2="1381.1" y2="1080.0" stroke="#eef0f3" stroke-width="1"/>
<line x1="1425.8" y1="913.5" x2="1425.8" y2="1080.0" stroke="#eef0f3" stroke-width="1"/>
<line x1="1470.5" y1="913.5" x2="1470.5" y2="1080.0" stroke="#eef0f3" stroke-width="1"/>
<line x1="1515.2" y1="913.5" x2="1515.2" y2="1080.0" stroke="#eef0f3" stroke-width="1"/>
<line x1="1589.7" y1="913.5" x2="1589.7" y2="1080.0" stroke="#eef0f3" stroke-width="1"/>
<g clip-path="url(#cgm)">
<path d="M1157.70 1023.90 C1162.62 1010.87 1166.66 987.61 1172.60 984.40 C1176.50 982.29 1181.37 1001.39 1187.49 1007.80 C1191.20 1011.69 1197.22 1014.73 1202.39 1015.60 C1207.05 1016.38 1212.46 1012.44 1217.29 1012.80 C1222.29 1013.17 1227.39 1015.84 1232.18 1017.80 C1237.23 1019.86 1241.91 1023.65 1247.08 1025.00 C1251.74 1026.22 1258.53 1022.84 1261.98 1025.60 C1268.36 1030.72 1271.57 1041.49 1276.87 1048.90 C1281.40 1055.22 1289.07 1071.03 1291.77 1067.20 C1298.90 1057.10 1298.92 1020.43 1306.67 1006.70 C1308.75 1003.01 1316.40 1012.58 1321.56 1014.40 C1326.23 1016.05 1334.17 1013.32 1336.46 1017.20 C1344.01 1030.02 1344.08 1055.63 1351.36 1065.00 C1353.91 1068.30 1361.08 1056.28 1366.25 1055.60 C1370.91 1054.99 1379.10 1064.74 1381.15 1061.10 C1388.93 1047.31 1391.63 1000.74 1396.04 1002.80 C1401.46 1005.33 1406.03 1075.00 1410.94 1075.00 C1415.86 1075.00 1417.82 1020.21 1425.84 1002.80 C1427.65 998.86 1436.42 1007.00 1440.73 1010.30 C1446.25 1014.52 1451.06 1026.24 1455.63 1025.60 C1460.89 1024.86 1466.03 1005.27 1470.53 1006.10 C1475.86 1007.08 1481.46 1033.16 1485.42 1031.10 C1491.30 1028.05 1496.76 986.54 1500.32 990.60 C1506.59 997.73 1509.01 1058.19 1515.22 1065.00 C1518.84 1068.98 1523.12 1030.74 1530.11 1023.30 C1532.95 1020.28 1539.93 1032.91 1545.01 1033.30 C1549.76 1033.67 1554.70 1026.95 1559.91 1025.60 C1564.53 1024.40 1570.15 1024.47 1574.80 1025.60 C1579.98 1026.85 1584.78 1030.42 1589.70 1032.80 L1589.70 1173.50 L1157.70 1173.50 Z" fill="url(#ggm)"/>
<path d="M1157.70 1006.70 C1162.62 1017.33 1167.47 1038.33 1172.60 1038.90 C1177.30 1039.42 1183.52 1007.77 1187.49 1010.00 C1193.35 1013.28 1197.25 1054.84 1202.39 1055.60 C1207.08 1056.29 1211.82 1016.14 1217.29 1014.40 C1221.65 1013.01 1227.01 1045.42 1232.18 1046.10 C1236.84 1046.71 1241.24 1020.69 1247.08 1018.30 C1251.07 1016.66 1257.94 1035.47 1261.98 1033.90 C1267.77 1031.64 1270.47 1014.12 1276.87 1006.70 C1280.30 1002.73 1287.67 997.96 1291.77 999.40 C1297.50 1001.42 1300.68 1013.50 1306.67 1017.20 C1310.51 1019.57 1317.27 1015.96 1321.56 1017.80 C1327.10 1020.18 1332.26 1031.25 1336.46 1030.00 C1342.09 1028.32 1345.12 1013.32 1351.36 1008.90 C1354.95 1006.35 1362.41 1006.60 1366.25 1008.90 C1372.24 1012.48 1377.57 1020.03 1381.15 1026.70 C1387.40 1038.35 1391.00 1064.03 1396.04 1064.40 C1400.83 1064.75 1404.55 1033.43 1410.94 1028.90 C1414.38 1026.46 1421.89 1044.98 1425.84 1043.30 C1431.73 1040.79 1435.54 1016.88 1440.73 1016.20 C1445.37 1015.59 1449.64 1032.82 1455.63 1039.40 C1459.47 1043.61 1466.78 1050.79 1470.53 1048.90 C1476.61 1045.84 1479.16 1028.14 1485.42 1024.40 C1488.99 1022.27 1495.44 1028.82 1500.32 1031.10 C1505.27 1033.41 1511.12 1039.74 1515.22 1038.30 C1520.95 1036.28 1524.70 1021.71 1530.11 1020.60 C1534.53 1019.70 1539.54 1029.67 1545.01 1032.20 C1549.37 1034.22 1556.04 1031.80 1559.91 1034.40 C1565.87 1038.40 1569.43 1046.79 1574.80 1052.20 C1579.26 1056.69 1584.78 1060.37 1589.70 1064.40" fill="none" stroke="#1e88e5" stroke-width="2" stroke-dasharray="5 4"/>
<path d="M1157.70 1023.90 C1162.62 1010.87 1166.66 987.61 1172.60 984.40 C1176.50 982.29 1181.37 1001.39 1187.49 1007.80 C1191.20 1011.69 1197.22 1014.73 1202.39 1015.60 C1207.05 1016.38 1212.46 1012.44 1217.29 1012.80 C1222.29 1013.17 1227.39 1015.84 1232.18 1017.80 C1237.23 1019.86 1241.91 1023.65 1247.08 1025.00 C1251.74 1026.22 1258.53 1022.84 1261.98 1025.60 C1268.36 1030.72 1271.57 1041.49 1276.87 1048.90 C1281.40 1055.22 1289.07 1071.03 1291.77 1067.20 C1298.90 1057.10 1298.92 1020.43 1306.67 1006.70 C1308.75 1003.01 1316.40 1012.58 1321.56 1014.40 C1326.23 1016.05 1334.17 1013.32 1336.46 1017.20 C1344.01 1030.02 1344.08 1055.63 1351.36 1065.00 C1353.91 1068.30 1361.08 1056.28 1366.25 1055.60 C1370.91 1054.99 1379.10 1064.74 1381.15 1061.10 C1388.93 1047.31 1391.63 1000.74 1396.04 1002.80 C1401.46 1005.33 1406.03 1075.00 1410.94 1075.00 C1415.86 1075.00 1417.82 1020.21 1425.84 1002.80 C1427.65 998.86 1436.42 1007.00 1440.73 1010.30 C1446.25 1014.52 1451.06 1026.24 1455.63 1025.60 C1460.89 1024.86 1466.03 1005.27 1470.53 1006.10 C1475.86 1007.08 1481.46 1033.16 1485.42 1031.10 C1491.30 1028.05 1496.76 986.54 1500.32 990.60 C1506.59 997.73 1509.01 1058.19 1515.22 1065.00 C1518.84 1068.98 1523.12 1030.74 1530.11 1023.30 C1532.95 1020.28 1539.93 1032.91 1545.01 1033.30 C1549.76 1033.67 1554.70 1026.95 1559.91 1025.60 C1564.53 1024.40 1570.15 1024.47 1574.80 1025.60 C1579.98 1026.85 1584.78 1030.42 1589.70 1032.80" fill="none" stroke="#1e88e5" stroke-width="2"/>
</g></svg>
<div class="yl" style="left:1050px;width:100px;top:908.0px">60.00%</div>
<div class="yl" style="left:1050px;width:100px;top:973.0px">45.00%</div>
<div class="yl" style="left:1050px;width:100px;top:1038.0px">30.00%</div>
<div class="yl" style="left:1050px;width:100px;top:1103.0px">15.00%</div>
<div class="lg" style="left:1616px;top:1031px;height:70px;width:220px"><div class="d1" style="background:#1e88e5;top:21px"></div><div class="d2" style="border-color:#1e88e5;top:22px"></div><div class="n">Average Gross Pro...</div><div class="p">100.0%</div><div class="v">32.96%</div><div class="pv">32.85%</div></div>
</body></html>
